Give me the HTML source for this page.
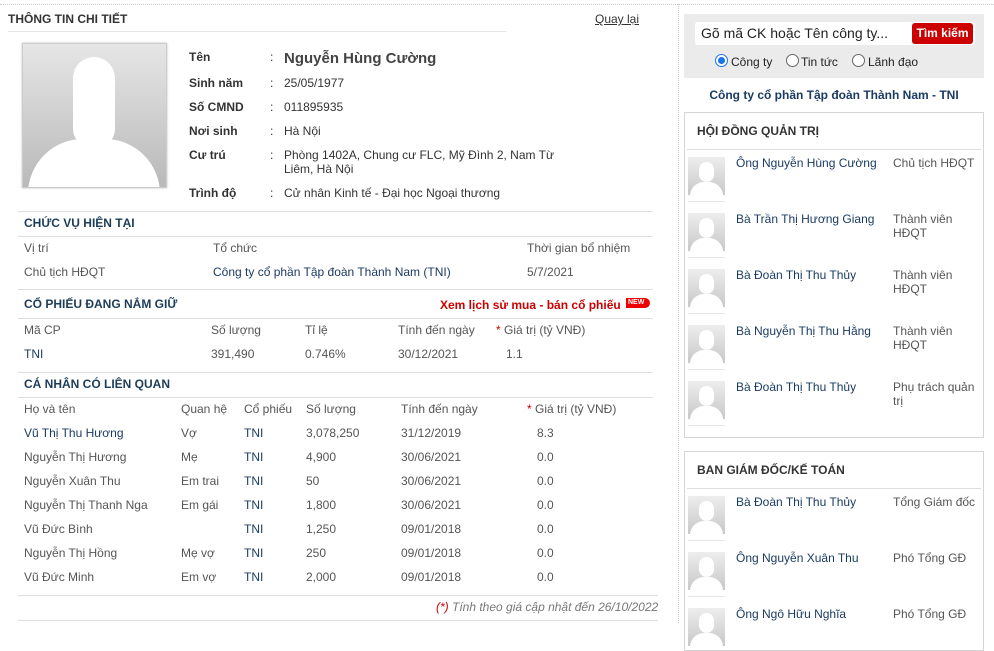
<!DOCTYPE html>
<html><head><meta charset="utf-8"><style>
*{margin:0;padding:0;box-sizing:border-box}
body{width:994px;height:623px;overflow:hidden;background:#fff;font-family:"Liberation Sans",Arial,sans-serif;font-size:12px;color:#333;position:relative}
.a{position:absolute;white-space:nowrap;line-height:14px}
.hl{position:absolute;height:1px;background:#ddd}
.h{font-weight:bold;color:#1c3d5a;font-size:12px}
.lb{font-weight:bold;color:#333}
.b{color:#1b3b63}
.g{color:#555}
.av{position:absolute;width:37px;height:38px;background:linear-gradient(#eee,#c8c8c8);overflow:hidden}
.av:before{content:"";position:absolute;left:11px;top:5px;width:15px;height:20px;border-radius:8px;background:#fff}
.av:after{content:"";position:absolute;left:2px;top:25px;width:33px;height:20px;border-radius:14px 14px 0 0;background:#fff}
.avl{position:absolute;width:37px;height:1px;background:#e6e6e6}
</style></head><body>
<div style="position:absolute;left:0;top:4px;width:994px;border-top:1px dotted #ccc"></div>
<div style="position:absolute;left:678px;top:4px;height:619px;border-left:1px dotted #ccc"></div>

<div class="a h" style="left:8px;top:12px;font-size:12px;color:#333">THÔNG TIN CHI TIẾT</div>
<div class="a" style="left:595px;top:12px;text-decoration:underline;color:#333">Quay lại</div>
<div class="hl" style="left:8px;top:31px;width:498px;background:#e5e5e5"></div>

<div style="position:absolute;left:22px;top:43px;width:145px;height:145px;border:1px solid #ccc;box-shadow:0 0 2px #bbb;background:linear-gradient(#e6e6e6,#b9b9b9);overflow:hidden">
<div style="position:absolute;left:50px;top:13px;width:42px;height:90px;border-radius:21px 21px 18px 18px;background:#fff"></div>
<div style="position:absolute;left:5px;top:95px;width:132px;height:80px;border-radius:55px 55px 0 0;background:#fff"></div>
</div>

<div class="a lb" style="left:189px;top:50px">Tên</div><div class="a" style="left:270px;top:50px">:</div>
<div class="a" style="left:284px;top:51px;font-size:15px;font-weight:bold;color:#444;line-height:16px">Nguyễn Hùng Cường</div>
<div class="a lb" style="left:189px;top:76px">Sinh năm</div><div class="a" style="left:270px;top:76px">:</div><div class="a" style="left:284px;top:76px">25/05/1977</div>
<div class="a lb" style="left:189px;top:100px">Số CMND</div><div class="a" style="left:270px;top:100px">:</div><div class="a" style="left:284px;top:100px">011895935</div>
<div class="a lb" style="left:189px;top:124px">Nơi sinh</div><div class="a" style="left:270px;top:124px">:</div><div class="a" style="left:284px;top:124px">Hà Nội</div>
<div class="a lb" style="left:189px;top:148px">Cư trú</div><div class="a" style="left:270px;top:148px">:</div><div class="a" style="left:284px;top:148px">Phòng 1402A, Chung cư FLC, Mỹ Đình 2, Nam Từ<br>Liêm, Hà Nội</div>
<div class="a lb" style="left:189px;top:186px">Trình độ</div><div class="a" style="left:270px;top:186px">:</div><div class="a" style="left:284px;top:186px">Cử nhân Kinh tế - Đại học Ngoại thương</div>
<div class="hl" style="left:18px;top:211px;width:635px"></div>

<div class="a h" style="left:24px;top:216px">CHỨC VỤ HIỆN TẠI</div>
<div class="hl" style="left:18px;top:236px;width:635px"></div>
<div class="a g" style="left:24px;top:241px">Vị trí</div><div class="a g" style="left:213px;top:241px">Tổ chức</div><div class="a g" style="left:527px;top:241px">Thời gian bổ nhiệm</div>
<div class="a g" style="left:24px;top:265px">Chủ tịch HĐQT</div><div class="a b" style="left:213px;top:265px">Công ty cổ phần Tập đoàn Thành Nam (TNI)</div><div class="a g" style="left:527px;top:265px">5/7/2021</div>
<div class="hl" style="left:18px;top:289px;width:635px"></div>

<div class="a h" style="left:24px;top:297px">CỔ PHIẾU ĐANG NẮM GIỮ</div>
<div class="a" style="left:440px;top:298px;color:#c00;font-weight:bold">Xem lịch sử mua - bán cổ phiếu</div>
<div class="a" style="left:626px;top:298px;width:24px;height:10px;background:#e00;color:#fff;font-size:7px;line-height:10px;font-weight:bold;padding-left:2px;border-radius:0 5px 5px 0">NEW</div>
<div class="hl" style="left:18px;top:318px;width:635px"></div>
<div class="a g" style="left:24px;top:323px">Mã CP</div><div class="a g" style="left:211px;top:323px">Số lượng</div><div class="a g" style="left:305px;top:323px">Tỉ lệ</div><div class="a g" style="left:398px;top:323px">Tính đến ngày</div><div class="a g" style="left:496px;top:323px"><span style="color:#c00">*</span> Giá trị (tỷ VNĐ)</div>
<div class="a b" style="left:24px;top:347px">TNI</div><div class="a g" style="left:211px;top:347px">391,490</div><div class="a g" style="left:305px;top:347px">0.746%</div><div class="a g" style="left:398px;top:347px">30/12/2021</div><div class="a g" style="left:506px;top:347px">1.1</div>
<div class="hl" style="left:18px;top:372px;width:635px"></div>

<div class="a h" style="left:24px;top:377px">CÁ NHÂN CÓ LIÊN QUAN</div>
<div class="hl" style="left:18px;top:397px;width:635px"></div>
<div class="a g" style="left:24px;top:402px">Họ và tên</div><div class="a g" style="left:181px;top:402px">Quan hệ</div><div class="a g" style="left:244px;top:402px">Cổ phiếu</div><div class="a g" style="left:306px;top:402px">Số lượng</div><div class="a g" style="left:401px;top:402px">Tính đến ngày</div><div class="a g" style="left:527px;top:402px"><span style="color:#c00">*</span> Giá trị (tỷ VNĐ)</div>

<div class="a b" style="left:24px;top:426px">Vũ Thị Thu Hương</div><div class="a g" style="left:181px;top:426px">Vợ</div><div class="a b" style="left:244px;top:426px">TNI</div><div class="a g" style="left:306px;top:426px">3,078,250</div><div class="a g" style="left:401px;top:426px">31/12/2019</div><div class="a g" style="left:537px;top:426px">8.3</div>
<div class="a g" style="left:24px;top:450px">Nguyễn Thị Hương</div><div class="a g" style="left:181px;top:450px">Mẹ</div><div class="a b" style="left:244px;top:450px">TNI</div><div class="a g" style="left:306px;top:450px">4,900</div><div class="a g" style="left:401px;top:450px">30/06/2021</div><div class="a g" style="left:537px;top:450px">0.0</div>
<div class="a g" style="left:24px;top:474px">Nguyễn Xuân Thu</div><div class="a g" style="left:181px;top:474px">Em trai</div><div class="a b" style="left:244px;top:474px">TNI</div><div class="a g" style="left:306px;top:474px">50</div><div class="a g" style="left:401px;top:474px">30/06/2021</div><div class="a g" style="left:537px;top:474px">0.0</div>
<div class="a g" style="left:24px;top:498px">Nguyễn Thị Thanh Nga</div><div class="a g" style="left:181px;top:498px">Em gái</div><div class="a b" style="left:244px;top:498px">TNI</div><div class="a g" style="left:306px;top:498px">1,800</div><div class="a g" style="left:401px;top:498px">30/06/2021</div><div class="a g" style="left:537px;top:498px">0.0</div>
<div class="a g" style="left:24px;top:522px">Vũ Đức Bình</div><div class="a b" style="left:244px;top:522px">TNI</div><div class="a g" style="left:306px;top:522px">1,250</div><div class="a g" style="left:401px;top:522px">09/01/2018</div><div class="a g" style="left:537px;top:522px">0.0</div>
<div class="a g" style="left:24px;top:546px">Nguyễn Thị Hồng</div><div class="a g" style="left:181px;top:546px">Mẹ vợ</div><div class="a b" style="left:244px;top:546px">TNI</div><div class="a g" style="left:306px;top:546px">250</div><div class="a g" style="left:401px;top:546px">09/01/2018</div><div class="a g" style="left:537px;top:546px">0.0</div>
<div class="a g" style="left:24px;top:570px">Vũ Đức Minh</div><div class="a g" style="left:181px;top:570px">Em vợ</div><div class="a b" style="left:244px;top:570px">TNI</div><div class="a g" style="left:306px;top:570px">2,000</div><div class="a g" style="left:401px;top:570px">09/01/2018</div><div class="a g" style="left:537px;top:570px">0.0</div>
<div class="hl" style="left:18px;top:595px;width:640px"></div>
<div class="a" style="left:436px;top:600px;font-style:italic;color:#777"><span style="color:#c00">(*)</span> Tính theo giá cập nhật đến 26/10/2022</div>
<div class="hl" style="left:18px;top:620px;width:640px"></div>

<!-- right -->
<div style="position:absolute;left:684px;top:14px;width:300px;height:64px;background:#ebebeb"></div>
<div style="position:absolute;left:695px;top:22px;width:280px;height:23px;background:#fff;border-radius:3px"></div>
<div class="a" style="left:701px;top:25px;font-size:14px;line-height:16px;color:#222">Gõ mã CK hoặc Tên công ty...</div>
<div class="a" style="left:912px;top:23px;width:61px;height:21px;background:#c00;border-radius:3px;color:#fff;font-weight:bold;text-align:center;line-height:20px">Tìm kiếm</div>
<div style="position:absolute;left:715px;top:54px;width:13px;height:13px;border-radius:50%;border:1px solid #1a73e8;background:#fff"><div style="position:absolute;left:2px;top:2px;width:7px;height:7px;border-radius:50%;background:#1a73e8"></div></div>
<div class="a" style="left:731px;top:55px;color:#222">Công ty</div>
<div style="position:absolute;left:786px;top:54px;width:13px;height:13px;border-radius:50%;border:1px solid #666;background:#fff"></div>
<div class="a" style="left:801px;top:55px;color:#222">Tin tức</div>
<div style="position:absolute;left:852px;top:54px;width:13px;height:13px;border-radius:50%;border:1px solid #666;background:#fff"></div>
<div class="a" style="left:868px;top:55px;color:#222">Lãnh đạo</div>
<div class="a" style="left:684px;top:88px;width:300px;text-align:center;font-weight:bold;color:#1b3b63">Công ty cổ phần Tập đoàn Thành Nam - TNI</div>

<div style="position:absolute;left:684px;top:112px;width:300px;height:326px;border:1px solid #d5d5d5"></div>
<div class="a" style="left:697px;top:124px;font-weight:bold;color:#333">HỘI ĐỒNG QUẢN TRỊ</div>
<div class="hl" style="left:687px;top:149px;width:294px"></div>

<div class="av" style="left:688px;top:157px"></div><div class="avl" style="left:688px;top:201px"></div>
<div class="a b" style="left:736px;top:156px">Ông Nguyễn Hùng Cường</div><div class="a g" style="left:893px;top:156px">Chủ tịch HĐQT</div>
<div class="av" style="left:688px;top:213px"></div><div class="avl" style="left:688px;top:257px"></div>
<div class="a b" style="left:736px;top:212px">Bà Trần Thị Hương Giang</div><div class="a g" style="left:893px;top:212px">Thành viên<br>HĐQT</div>
<div class="av" style="left:688px;top:269px"></div><div class="avl" style="left:688px;top:313px"></div>
<div class="a b" style="left:736px;top:268px">Bà Đoàn Thị Thu Thủy</div><div class="a g" style="left:893px;top:268px">Thành viên<br>HĐQT</div>
<div class="av" style="left:688px;top:325px"></div><div class="avl" style="left:688px;top:369px"></div>
<div class="a b" style="left:736px;top:324px">Bà Nguyễn Thị Thu Hằng</div><div class="a g" style="left:893px;top:324px">Thành viên<br>HĐQT</div>
<div class="av" style="left:688px;top:381px"></div><div class="avl" style="left:688px;top:425px"></div>
<div class="a b" style="left:736px;top:380px">Bà Đoàn Thị Thu Thủy</div><div class="a g" style="left:893px;top:380px">Phụ trách quản<br>trị</div>

<div style="position:absolute;left:684px;top:451px;width:300px;height:200px;border:1px solid #d5d5d5"></div>
<div class="a" style="left:697px;top:463px;font-weight:bold;color:#333">BAN GIÁM ĐỐC/KẾ TOÁN</div>
<div class="hl" style="left:687px;top:488px;width:294px"></div>
<div class="av" style="left:688px;top:496px"></div><div class="avl" style="left:688px;top:540px"></div>
<div class="a b" style="left:736px;top:495px">Bà Đoàn Thị Thu Thủy</div><div class="a g" style="left:893px;top:495px">Tổng Giám đốc</div>
<div class="av" style="left:688px;top:552px"></div><div class="avl" style="left:688px;top:596px"></div>
<div class="a b" style="left:736px;top:551px">Ông Nguyễn Xuân Thu</div><div class="a g" style="left:893px;top:551px">Phó Tổng GĐ</div>
<div class="av" style="left:688px;top:608px"></div>
<div class="a b" style="left:736px;top:607px">Ông Ngô Hữu Nghĩa</div><div class="a g" style="left:893px;top:607px">Phó Tổng GĐ</div>
</body></html>
